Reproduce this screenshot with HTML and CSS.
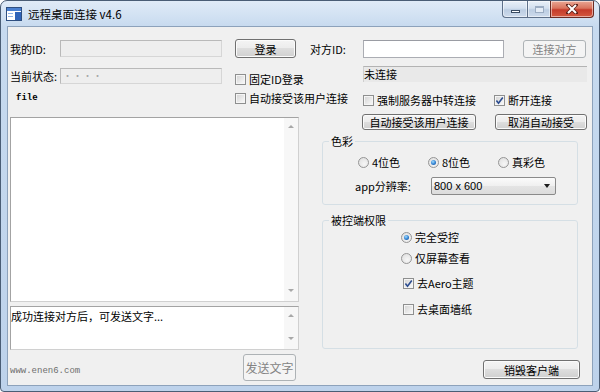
FILE: index.html
```html
<!DOCTYPE html>
<html lang="zh-CN">

<head>
    <meta charset="UTF-8">
    <meta name="viewport" content="width=device-width, initial-scale=1.0">
    <title>远程桌面连接 v4.6</title>
    <link rel="stylesheet" href="styles.css">
</head>

<body>

    <div class="window">

        <!-- title bar -->
        <div class="titlebar">
            <svg class="app-icon" width="16" height="14" viewBox="0 0 16 14">
                <rect x="0.5" y="0.5" width="15" height="13" fill="#ffffff" stroke="#2f4f80"/>
                <rect x="1" y="1" width="14" height="3" fill="#4a80d0"/>
                <rect x="9" y="5" width="6" height="8" fill="#2f63b8"/>
                <rect x="2" y="6" width="5" height="1" fill="#8fb2e4"/>
                <rect x="2" y="9" width="5" height="1" fill="#8fb2e4"/>
            </svg>
            <span class="title">远程桌面连接 v4.6</span>
            <div class="caption-btns">
                <div class="cap cap-min"><span class="min-glyph"></span></div>
                <div class="cap cap-max"><span class="max-glyph"></span></div>
                <div class="cap cap-close">
                    <svg width="12" height="10" viewBox="0 0 12 10">
                        <path d="M2 1 L10 9 M10 1 L2 9" stroke="#5b2018" stroke-width="3.6" stroke-linecap="square"/>
                        <path d="M2 1 L10 9 M10 1 L2 9" stroke="#ffffff" stroke-width="2"/>
                    </svg>
                </div>
            </div>
        </div>

        <div class="client">

            <!-- left side: login + chat -->
            <div class="left">
                <div class="lrow row-1">
                    <span class="lbl">我的ID:</span>
                    <div class="edit disabled"></div>
                    <button class="btn login-btn">登录</button>
                </div>
                <div class="lrow row-2">
                    <span class="lbl">当前状态:</span>
                    <div class="edit disabled dots">····</div>
                    <label class="chk low"><span class="box"></span>固定ID登录</label>
                </div>
                <div class="lrow row-3">
                    <span class="file-lbl">file</span>
                    <label class="chk"><span class="box"></span>自动接受该用户连接</label>
                </div>

                <div class="memo memo-log">
                    <div class="memo-text"></div>
                    <div class="vscroll"><span class="arr-up"></span><span class="arr-down"></span></div>
                </div>
                <div class="memo memo-msg">
                    <div class="memo-text">成功连接对方后，可发送文字...</div>
                    <div class="vscroll"><span class="arr-up"></span><span class="arr-down"></span></div>
                </div>

                <div class="foot">
                    <span class="site">www.enen6.com</span>
                    <button class="btn disabled send-btn">发送文字</button>
                </div>
            </div>

            <!-- right side: remote + options -->
            <div class="right">
                <div class="rrow-1">
                    <span class="lbl lbl-peer">对方ID:</span>
                    <div class="edit peer-id"></div>
                    <button class="btn disabled connect-btn">连接对方</button>
                </div>
                <div class="status">未连接</div>
                <div class="rrow-3">
                    <label class="chk relay"><span class="box"></span>强制服务器中转连接</label>
                    <label class="chk"><span class="box">
                        <svg width="9" height="9" viewBox="0 0 9 9"><path d="M1.4 4.6 L3.5 7.2 L7.8 1.4" fill="none" stroke="#2b4c8f" stroke-width="1.6"/></svg>
                    </span>断开连接</label>
                </div>
                <div class="rrow-4">
                    <button class="btn accept-btn">自动接受该用户连接</button>
                    <button class="btn cancel-btn">取消自动接受</button>
                </div>

                <fieldset class="group group-color">
                    <legend>色彩</legend>
                    <div class="radios">
                        <label class="radio"><span class="dot"></span>4位色</label>
                        <label class="radio on"><span class="dot"></span>8位色</label>
                        <label class="radio"><span class="dot"></span>真彩色</label>
                    </div>
                    <div class="combo-row">
                        <span class="combo-lbl">app分辨率:</span>
                        <div class="combo"><span>800 x 600</span><span class="combo-arrow"></span></div>
                    </div>
                </fieldset>

                <fieldset class="group group-perm">
                    <legend>被控端权限</legend>
                    <label class="radio on perm p1"><span class="dot"></span>完全受控</label>
                    <label class="radio perm p2"><span class="dot"></span>仅屏幕查看</label>
                    <label class="chk perm p3"><span class="box">
                        <svg width="9" height="9" viewBox="0 0 9 9"><path d="M1.4 4.6 L3.5 7.2 L7.8 1.4" fill="none" stroke="#2b4c8f" stroke-width="1.6"/></svg>
                    </span>去Aero主题</label>
                    <label class="chk perm p4"><span class="box"></span>去桌面墙纸</label>
                </fieldset>

                <button class="btn destroy-btn">销毁客户端</button>
            </div>

        </div>
    </div>

</body>
</html>
```

FILE: styles.css
```css
body {
    margin: 0;
    padding: 0;
    background: #ffffff;
    font-family: "Noto Sans CJK SC", "Liberation Sans", sans-serif;
    font-size: 11px;
    color: #000;
}

.window {
    width: 600px;
    height: 392px;
    box-sizing: border-box;
    border: 1px solid #4a5d75;
    border-radius: 7px 7px 4px 4px;
    background: linear-gradient(180deg, #e0ebf7 0px, #c7daef 26px, #bdd2eb 100%);
    display: flex;
    flex-direction: column;
    overflow: hidden;
}

/* title bar */
.titlebar {
    height: 25px;
    display: flex;
    align-items: flex-start;
    padding-left: 5px;
}

.app-icon {
    margin-top: 6px;
}

.title {
    margin-top: 5px;
    margin-left: 6px;
    line-height: 16px;
    font-size: 11.5px;
}

.caption-btns {
    margin-left: auto;
    margin-right: 5px;
    display: flex;
}

.cap {
    height: 17px;
    box-sizing: border-box;
    border: 1px solid #5e7089;
    border-top: none;
    display: flex;
    align-items: center;
    justify-content: center;
    background: linear-gradient(180deg, #e9f0f8 0%, #d3e0ef 45%, #bccde2 55%, #cedbec 100%);
    box-shadow: inset 0 0 0 1px rgba(255, 255, 255, 0.5);
}

.cap-min {
    width: 25px;
    border-radius: 0 0 0 4px;
    border-right: none;
    align-items: flex-end;
    padding-bottom: 4px;
}

.cap-max {
    width: 23px;
    border-right: none;
}

.cap-close {
    width: 44px;
    border-color: #6b2a22;
    border-radius: 0 0 4px 0;
    background: linear-gradient(180deg, #eaa795 0%, #d9735d 45%, #c53b2a 55%, #d4583f 100%);
}

.min-glyph {
    width: 9px;
    height: 3px;
    box-sizing: border-box;
    border: 1px solid #3a4c63;
    background: #fff;
}

.max-glyph {
    width: 9px;
    height: 7px;
    box-sizing: border-box;
    border: 1px solid #9cadc3;
    border-top-width: 2px;
    background: #e4ecf6;
}

/* client area */
.client {
    margin: 0 6px;
    height: 360px;
    box-sizing: border-box;
    border: 1px solid #8da2bb;
    background: #f0f0f0;
    display: flex;
}

.left {
    width: 292px;
    padding-left: 2px;
    box-sizing: border-box;
    display: flex;
    flex-direction: column;
}

.right {
    width: 292px;
    padding-left: 10px;
    box-sizing: border-box;
    display: flex;
    flex-direction: column;
}

.lrow {
    display: grid;
    grid-template-columns: 50px 162px auto;
    align-items: center;
    justify-items: start;
}

.lrow .btn,
.lrow .chk {
    margin-left: 13px;
}

.row-1 {
    margin-top: 12px;
    height: 19px;
}

.row-2 {
    margin-top: 7px;
    height: 17px;
}

.row-3 {
    margin-top: 8px;
    height: 16px;
}

.lbl {
    white-space: nowrap;
    line-height: 14px;
}

.file-lbl {
    grid-column: span 2;
    padding-left: 6px;
    font-family: "Liberation Mono", monospace;
    font-weight: bold;
    font-size: 9px;
}

/* edit boxes */
.edit {
    width: 100%;
    height: 17px;
    box-sizing: border-box;
    border: 1px solid #abadb3;
    border-top-color: #9a9ca3;
    background: #fff;
}

.edit.disabled {
    background: #eeeeee;
    border-color: #b9b9b9 #d6d6d6 #d6d6d6 #b9b9b9;
}

.row-2 .edit {
    height: 16px;
}

.dots {
    color: #a6a6a6;
    font-size: 9px;
    line-height: 13px;
    padding-left: 2px;
    letter-spacing: 1px;
}

/* buttons */
.btn {
    height: 19px;
    box-sizing: border-box;
    padding: 0;
    border: 1px solid #707070;
    border-radius: 3px;
    background: linear-gradient(180deg, #f4f4f4 0%, #ececec 49%, #dedede 50%, #d0d0d0 100%);
    box-shadow: inset 0 0 0 1px #fbfbfb;
    font-family: "Noto Sans CJK SC", sans-serif;
    font-size: 11px;
    color: #000;
    white-space: nowrap;
    display: flex;
    align-items: center;
    justify-content: center;
}

.btn.disabled {
    border-color: #adb2b5;
    background: #f4f4f4;
    box-shadow: none;
    color: #838383;
}

.login-btn {
    width: 61px;
}

/* checkbox */
.chk {
    display: flex;
    align-items: center;
    gap: 3px;
    white-space: nowrap;
    line-height: 14px;
    height: 14px;
}

.chk.low {
    margin-top: 7px;
}

.box {
    width: 11px;
    height: 11px;
    box-sizing: border-box;
    border: 1px solid #8e8f8f;
    background: linear-gradient(135deg, #d2d2d2 0%, #efefef 70%, #fafafa 100%);
    box-shadow: inset 0 0 0 1px #f5f5f5;
    display: flex;
    align-items: center;
    justify-content: center;
    flex-shrink: 0;
}

/* radio */
.radio {
    display: flex;
    align-items: center;
    gap: 3px;
    white-space: nowrap;
    line-height: 14px;
    height: 14px;
}

.dot {
    width: 11px;
    height: 11px;
    box-sizing: border-box;
    border: 1px solid #959595;
    border-radius: 50%;
    background: radial-gradient(circle at 60% 65%, #f6f6f6 0%, #dcdcdc 100%);
    display: flex;
    align-items: center;
    justify-content: center;
}

.radio.on .dot::after {
    content: "";
    width: 5px;
    height: 5px;
    border-radius: 50%;
    background: radial-gradient(circle at 40% 35%, #9fdcff 0%, #2f7fd0 55%, #174a8a 100%);
}

/* memo boxes */
.memo {
    width: 289px;
    box-sizing: border-box;
    border: 1px solid #a3a3a3;
    border-right-color: #d0d0d0;
    border-bottom-color: #d0d0d0;
    background: #fff;
    display: flex;
}

.memo-log {
    margin-top: 11px;
    height: 185px;
}

.memo-msg {
    margin-top: 4px;
    height: 44px;
}

.memo-text {
    flex: 1;
    padding-top: 2px;
    line-height: 14px;
}

.vscroll {
    width: 14px;
    background: #f7f7f7;
    display: flex;
    flex-direction: column;
    justify-content: space-between;
    align-items: center;
    padding: 7px 0 9px;
}

.arr-up {
    border-left: 3px solid transparent;
    border-right: 3px solid transparent;
    border-bottom: 3px solid #a8a8a8;
}

.arr-down {
    border-left: 3px solid transparent;
    border-right: 3px solid transparent;
    border-top: 3px solid #a8a8a8;
}

.foot {
    margin-top: 4px;
    height: 27px;
    padding-right: 4px;
    display: flex;
    align-items: center;
    justify-content: space-between;
}

.site {
    margin-top: 6px;
    font-family: "Liberation Mono", monospace;
    font-size: 9px;
    color: #6e6e6e;
}

.send-btn {
    width: 53px;
    height: 27px;
    font-size: 12px;
}

/* right side rows */
.rrow-1 {
    margin-top: 12px;
    height: 19px;
    display: flex;
    align-items: center;
}

.lbl-peer {
    width: 53px;
}

.peer-id {
    width: 141px;
    height: 18px;
}

.connect-btn {
    margin-left: 19px;
    width: 63px;
    height: 18px;
}

.status {
    margin-top: 8px;
    margin-left: 53px;
    width: 224px;
    height: 16px;
    box-sizing: border-box;
    border-top: 1px solid #b3b3b3;
    border-left: 1px solid #cfcfcf;
    background: #e9e9e9;
    line-height: 14px;
}

.rrow-3 {
    margin-top: 11px;
    height: 14px;
    display: flex;
    align-items: center;
    padding-left: 53px;
}

.relay {
    width: 131px;
}

.rrow-4 {
    margin-top: 7px;
    height: 16px;
    display: flex;
    padding-left: 52px;
}

.rrow-4 .btn {
    height: 16px;
}

.accept-btn {
    width: 114px;
}

.cancel-btn {
    margin-left: 19px;
    width: 92px;
}

/* group boxes */
.group {
    margin: 0 0 0 12px;
    width: 256px;
    box-sizing: border-box;
    border: 1px solid #d5dfe5;
    border-radius: 3px;
    padding: 0;
    min-width: 0;
    display: flex;
    flex-direction: column;
}

.group legend {
    padding: 0 2px;
    margin-left: 6px;
    line-height: 14px;
    font-size: 11px;
}

.group-color {
    margin-top: 4px;
    height: 71px;
}

.group-perm {
    margin-top: 8px;
    height: 136px;
}

.radios {
    margin-top: 7px;
    height: 14px;
    display: flex;
    padding-left: 35px;
}

.radios .radio {
    width: 70px;
}

.combo-row {
    margin-top: 8px;
    height: 18px;
    display: flex;
    align-items: center;
    padding-left: 32px;
}

.combo-lbl {
    width: 76px;
    white-space: nowrap;
}

.combo {
    width: 125px;
    height: 18px;
    box-sizing: border-box;
    border: 1px solid #8a8a8a;
    border-radius: 2px;
    background: linear-gradient(180deg, #fbfbfb 0%, #f0f0f0 49%, #e4e4e4 50%, #dcdcdc 100%);
    padding: 0 5px 0 2px;
    display: flex;
    align-items: center;
    justify-content: space-between;
    font-family: "Liberation Sans", sans-serif;
    font-size: 11px;
}

.combo-arrow {
    border-left: 3.5px solid transparent;
    border-right: 3.5px solid transparent;
    border-top: 4px solid #1c1c1c;
}

.perm.p1 {
    margin-top: 3px;
    padding-left: 78px;
}

.perm.p2 {
    margin-top: 7px;
    padding-left: 78px;
}

.perm.p3 {
    margin-top: 11px;
    padding-left: 80px;
}

.perm.p4 {
    margin-top: 12px;
    padding-left: 80px;
}

.destroy-btn {
    margin-top: 11px;
    margin-left: 173px;
    width: 97px;
    height: 19px;
}
```
